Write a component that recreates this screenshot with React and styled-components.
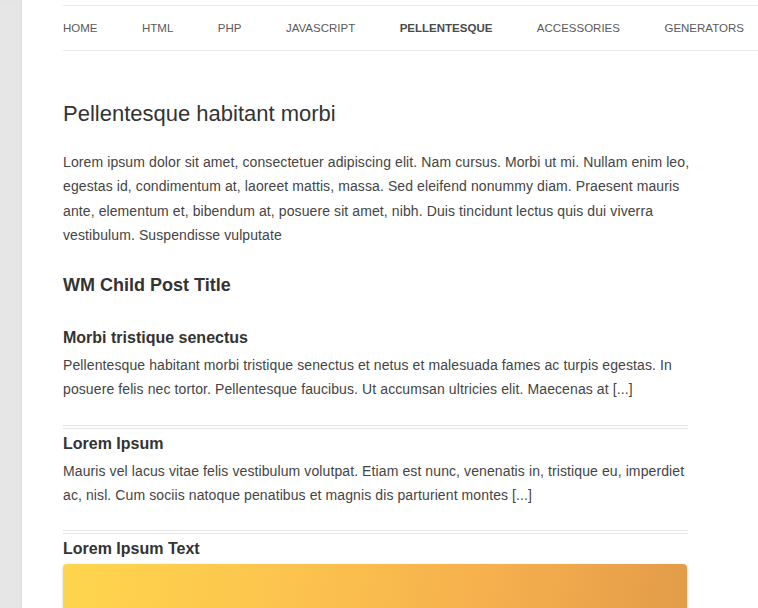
import React from 'react';
import styled, { createGlobalStyle } from 'styled-components';

const GlobalStyle = createGlobalStyle`
  html, body {
    margin: 0;
    padding: 0;
    background: #fff;
  }
  body {
    font-family: "Liberation Sans", Arial, sans-serif;
    color: #444;
    overflow: hidden;
  }
`;

const Page = styled.div`
  display: flex;
  min-height: 608px;
  width: 758px;
  overflow: hidden;
`;

const Gutter = styled.div`
  flex: 0 0 22px;
  background: #e6e6e6;
  box-shadow: inset -1px 0 2px rgba(0, 0, 0, 0.04);
`;

const Main = styled.main`
  flex: 1;
  min-width: 0;
  background: #fff;
  padding: 5px 0 0 41px;
`;

const Nav = styled.nav`
  border-top: 1px solid #ebebeb;
  border-bottom: 1px solid #ebebeb;
  height: 44px;
  display: flex;
  align-items: center;
  white-space: nowrap;
  overflow: hidden;
`;

const NavItem = styled.a`
  font-size: 11.5px;
  text-transform: uppercase;
  color: ${p => (p.$active ? '#4a4a4a' : '#5a5a5a')};
  font-weight: ${p => (p.$active ? 700 : 400)};
  text-decoration: none;
  margin-right: 44.5px;
  flex-shrink: 0;
`;

const Content = styled.div`
  width: 625px;
`;

const PageTitle = styled.h1`
  font-size: 22px;
  font-weight: 400;
  color: #333;
  line-height: 26px;
  margin: 50px 0 23px;
`;

const Text = styled.p`
  font-size: 14px;
  line-height: 24.3px;
  letter-spacing: 0.1px;
  color: #444;
  margin: 0 -6px 0 0;
`;

const SectionTitle = styled.h2`
  font-size: 18px;
  font-weight: 700;
  color: #333;
  line-height: 22px;
  margin: 27px 0 32px;
`;

const Post = styled.article`
  padding: ${p => (p.$first ? '0' : '5px')} 0 23px;
  border-top: ${p => (p.$first ? 'none' : '4px double #e6e6e6')};
`;

const PostTitle = styled.h3`
  font-size: 16px;
  font-weight: 700;
  color: #333;
  line-height: 19px;
  margin: 0 0 6px;
`;

const Banner = styled.div`
  height: 80px;
  margin-right: 1px;
  border-radius: 4px 4px 0 0;
  background: linear-gradient(100deg, #ffd54c 0%, #fcc44e 35%, #f5ae4d 70%, #e29b48 100%);
  box-shadow: 0 1px 3px rgba(0, 0, 0, 0.18);
`;

const navLinks = ['Home', 'HTML', 'PHP', 'JavaScript', 'Pellentesque', 'Accessories', 'Generators'];

const posts = [
  {
    title: 'Morbi tristique senectus',
    text: 'Pellentesque habitant morbi tristique senectus et netus et malesuada fames ac turpis egestas. In posuere felis nec tortor. Pellentesque faucibus. Ut accumsan ultricies elit. Maecenas at [...]',
  },
  {
    title: 'Lorem Ipsum',
    text: 'Mauris vel lacus vitae felis vestibulum volutpat. Etiam est nunc, venenatis in, tristique eu, imperdiet ac, nisl. Cum sociis natoque penatibus et magnis dis parturient montes [...]',
  },
];

const App = () => (
  <>
    <GlobalStyle />
    <Page>
      <Gutter />
      <Main>
        <Nav>
          {navLinks.map(link => (
            <NavItem key={link} href="#" $active={link === 'Pellentesque'}>
              {link}
            </NavItem>
          ))}
        </Nav>
        <Content>
          <PageTitle>Pellentesque habitant morbi</PageTitle>
          <Text>
            Lorem ipsum dolor sit amet, consectetuer adipiscing elit. Nam cursus. Morbi ut mi. Nullam enim leo,
            egestas id, condimentum at, laoreet mattis, massa. Sed eleifend nonummy diam. Praesent mauris
            ante, elementum et, bibendum at, posuere sit amet, nibh. Duis tincidunt lectus quis dui viverra
            vestibulum. Suspendisse vulputate
          </Text>
          <SectionTitle>WM Child Post Title</SectionTitle>
          {posts.map((post, i) => (
            <Post key={post.title} $first={i === 0}>
              <PostTitle>{post.title}</PostTitle>
              <Text>{post.text}</Text>
            </Post>
          ))}
          <Post>
            <PostTitle>Lorem Ipsum Text</PostTitle>
            <Banner />
          </Post>
        </Content>
      </Main>
    </Page>
  </>
);

export default App;
